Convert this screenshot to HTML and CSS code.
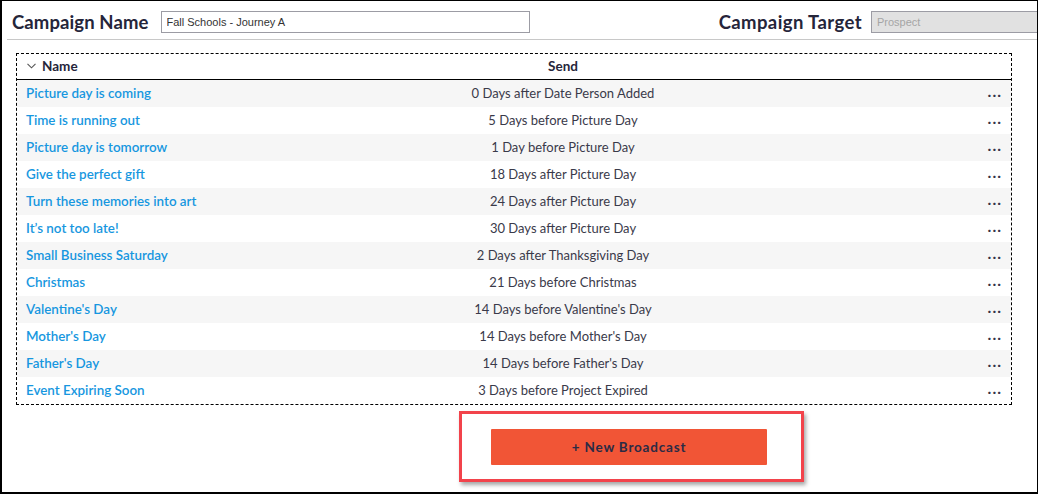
FILE: index.html
```html
<!DOCTYPE html>
<html lang="en">
<head>
<meta charset="utf-8">
<title>Campaign</title>
<link rel="stylesheet" href="styles.css">
</head>
<body>
<div class="frame">
  <header class="top">
    <div class="field">
      <label class="label">Campaign Name</label>
      <input class="input name-input" type="text" value="Fall Schools - Journey A">
    </div>
    <div class="field target">
      <label class="label">Campaign Target</label>
      <input class="input target-input" type="text" placeholder="Prospect" disabled>
    </div>
  </header>
  <div class="table">
    <div class="row head">
      <div class="c-name"><span class="chev"><svg width="9" height="6" viewBox="0 0 9 6"><path d="M0.5 0.8 L4.5 4.8 L8.5 0.8" fill="none" stroke="#555" stroke-width="1.1"/></svg></span>Name</div>
      <div class="c-send">Send</div>
      <div class="c-act"></div>
    </div>
    <div class="row"><div class="c-name">Picture day is coming</div><div class="c-send">0 Days after Date Person Added</div><div class="c-act">...</div></div>
    <div class="row"><div class="c-name">Time is running out</div><div class="c-send">5 Days before Picture Day</div><div class="c-act">...</div></div>
    <div class="row"><div class="c-name">Picture day is tomorrow</div><div class="c-send">1 Day before Picture Day</div><div class="c-act">...</div></div>
    <div class="row"><div class="c-name">Give the perfect gift</div><div class="c-send">18 Days after Picture Day</div><div class="c-act">...</div></div>
    <div class="row"><div class="c-name">Turn these memories into art</div><div class="c-send">24 Days after Picture Day</div><div class="c-act">...</div></div>
    <div class="row"><div class="c-name">It’s not too late!</div><div class="c-send">30 Days after Picture Day</div><div class="c-act">...</div></div>
    <div class="row"><div class="c-name">Small Business Saturday</div><div class="c-send">2 Days after Thanksgiving Day</div><div class="c-act">...</div></div>
    <div class="row"><div class="c-name">Christmas</div><div class="c-send">21 Days before Christmas</div><div class="c-act">...</div></div>
    <div class="row"><div class="c-name">Valentine's Day</div><div class="c-send">14 Days before Valentine's Day</div><div class="c-act">...</div></div>
    <div class="row"><div class="c-name">Mother's Day</div><div class="c-send">14 Days before Mother's Day</div><div class="c-act">...</div></div>
    <div class="row"><div class="c-name">Father's Day</div><div class="c-send">14 Days before Father's Day</div><div class="c-act">...</div></div>
    <div class="row"><div class="c-name">Event Expiring Soon</div><div class="c-send">3 Days before Project Expired</div><div class="c-act">...</div></div>
  </div>
  <div class="actions">
    <div class="highlight">
      <button class="btn" type="button">+ New Broadcast</button>
    </div>
  </div>
</div>
</body>
</html>
```
FILE: styles.css
```css
* { box-sizing: border-box; }
html, body { margin: 0; padding: 0; background: #fff; }
body { font-family: Lato, "Open Sans", sans-serif; color: #333; }
.frame {
  width: 1038px;
  height: 494px;
  border: 1px solid #000;
  border-left-width: 2px;
  border-bottom-width: 2px;
  overflow: hidden;
}
.top {
  display: flex;
  justify-content: space-between;
  align-items: center;
  height: 39px;
  margin-left: 5px;
  padding: 10px 0 6px 5px;
  border-bottom: 1px solid #c8c8c8;
}
.field { display: flex; align-items: center; gap: 12px; }
.target { gap: 9px; }
.label {
  font-size: 18.5px;
  font-weight: 700;
  color: #25253a;
  letter-spacing: 0.1px;
}
.target .label { letter-spacing: 0.4px; }
.input {
  height: 22px;
  border: 1px solid #9c9ca4;
  font-family: "Liberation Sans", sans-serif;
  font-size: 11px;
  padding: 0 5px;
  color: #333;
  outline: none;
  margin: 0;
}
.name-input { width: 369px; background: #fff; }
.target-input { width: 166px; background: #e1e1e1; border-right: none; }
.target-input::placeholder { color: #a5a5a5; }
.table {
  margin: 13px 25px 0 14px;
  border: 1px dashed #000;
}
.row {
  display: grid;
  grid-template-columns: 403px 286px 1fr;
  align-items: center;
  height: 27px;
  font-size: 13px;
  padding-bottom: 1px;
}
.row:nth-child(even) { background: #f6f6f6; }
.row.head {
  height: 26px;
  border-bottom: 1px solid #000;
  font-weight: 700;
  font-size: 13.5px;
  color: #25253a;
  background: #fff;
}
.c-name { padding-left: 9px; color: #1797e0; font-weight: 600; font-size: 13.4px; white-space: nowrap; }
.head .c-name { color: #25253a; font-weight: 700; display: flex; align-items: center; font-size: 13.5px; }
.chev { display: inline-flex; width: 15px; margin-left: 1px; padding-bottom: 1px; }
.c-send { text-align: center; color: #3a3a4a; white-space: nowrap; }
.head .c-send { color: #25253a; }
.c-act {
  text-align: right;
  padding-right: 9px;
  font-weight: 700;
  font-size: 16px;
  color: #33334a;
  letter-spacing: 1px;
  line-height: 1;
  padding-bottom: 4px;
}
.actions { display: flex; padding-left: 457px; padding-top: 6px; }
.highlight {
  width: 345px;
  height: 71px;
  border: 3px solid #f2434b;
  box-shadow: 2px 3px 4px rgba(0,0,0,0.35);
  display: flex;
  align-items: center;
  padding-left: 29px;
}
.btn {
  width: 276px;
  height: 36px;
  border: none;
  border-radius: 1px;
  background: #f15536;
  color: #2b2b45;
  font-family: Lato, sans-serif;
  font-weight: 700;
  font-size: 13.5px;
  letter-spacing: 0.8px;
  cursor: pointer;
}
```
